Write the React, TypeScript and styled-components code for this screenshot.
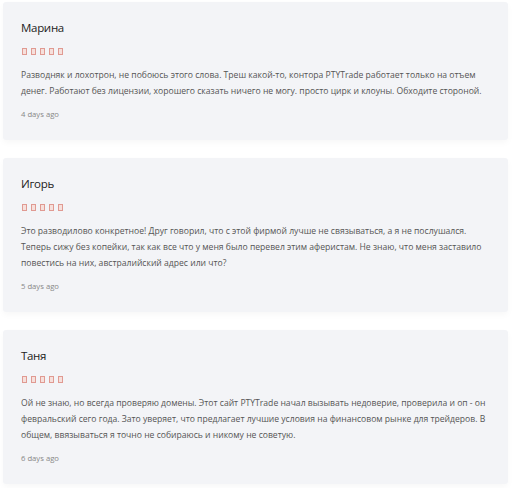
import { FC } from 'react';
import styled, { createGlobalStyle } from 'styled-components';

const GlobalStyle = createGlobalStyle`
	body {
		margin: 0;
		background: #ffffff;
		font-family: 'Open Sans', 'Liberation Sans', sans-serif;
	}
`;

const Page = styled.div`
	display: flex;
	flex-direction: column;
	gap: 18px;
	padding: 2px 4px 4px 3px;
`;

const Card = styled.div`
	background: #f3f4f7;
	border-radius: 3px;
	padding: 16px 12px 20px 18px;
	box-shadow: 0 3px 6px rgba(0, 0, 0, 0.03);
`;

const Name = styled.h3`
	margin: 0;
	font-size: 11.5px;
	letter-spacing: -0.3px;
	line-height: 20px;
	font-weight: 400;
	color: #222;
`;

const Stars = styled.div`
	display: flex;
	gap: 4px;
	height: 10px;
	align-items: center;
	margin: 8px 0 11px 1px;
`;

const Star = styled.span`
	display: block;
	width: 3px;
	height: 5px;
	border: 1px solid #e09a92;
	background: #f6e0dc;
`;

const Text = styled.p`
	margin: 0;
	font-size: 8.6px;
	line-height: 16px;
	color: #555;
`;

const Date = styled.div`
	margin-top: 9px;
	font-size: 7.7px;
	line-height: 12px;
	color: #888;
`;

const reviews = [
	{
		name: 'Марина',
		text: 'Разводняк и лохотрон, не побоюсь этого слова. Треш какой-то, контора PTYTrade работает только на отъем денег. Работают без лицензии, хорошего сказать ничего не могу. просто цирк и клоуны. Обходите стороной.',
		date: '4 days ago',
	},
	{
		name: 'Игорь',
		text: 'Это разводилово конкретное! Друг говорил, что с этой фирмой лучше не связываться, а я не послушался. Теперь сижу без копейки, так как все что у меня было перевел этим аферистам. Не знаю, что меня заставило повестись на них, австралийский адрес или что?',
		date: '5 days ago',
	},
	{
		name: 'Таня',
		text: 'Ой не знаю, но всегда проверяю домены. Этот сайт PTYTrade начал вызывать недоверие, проверила и оп - он февральский сего года. Зато уверяет, что предлагает лучшие условия на финансовом рынке для трейдеров. В общем, ввязываться я точно не собираюсь и никому не советую.',
		date: '6 days ago',
	},
];

const App: FC = () => {
	return (
		<>
			<GlobalStyle />
			<Page>
				{reviews.map((r) => (
					<Card key={r.name}>
						<Name>{r.name}</Name>
						<Stars>
							{[0, 1, 2, 3, 4].map((i) => (
								<Star key={i} />
							))}
						</Stars>
						<Text>{r.text}</Text>
						<Date>{r.date}</Date>
					</Card>
				))}
			</Page>
		</>
	);
};

export default App;
